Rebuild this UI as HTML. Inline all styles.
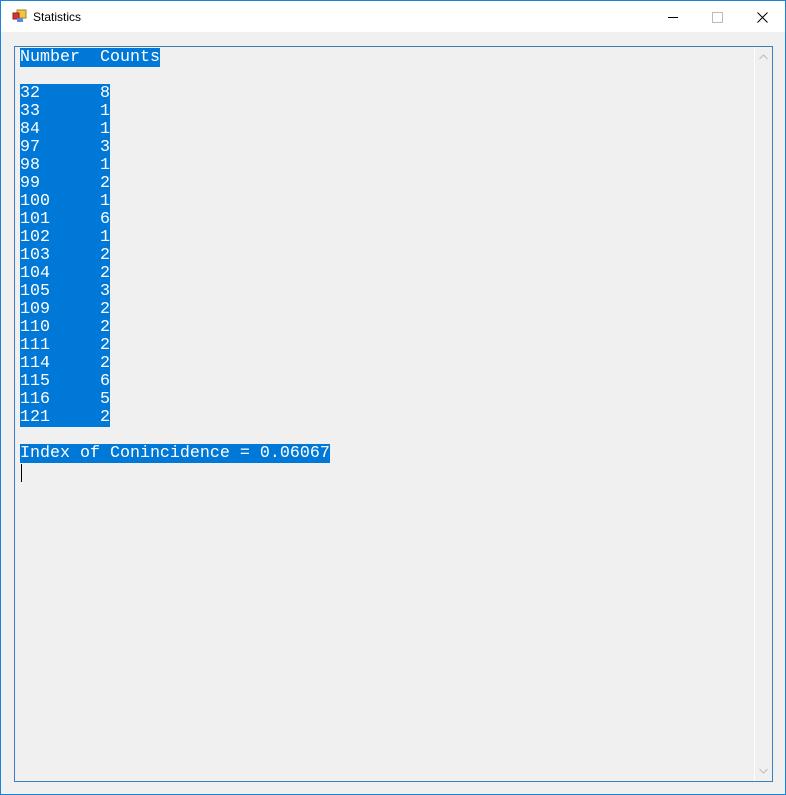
<!DOCTYPE html>
<html><head><style>
html,body{margin:0;padding:0;}
body{width:786px;height:795px;position:relative;background:#f0f0f0;overflow:hidden;font-family:"Liberation Sans",sans-serif;}
.win{position:absolute;left:0;top:0;width:784px;height:793px;border:1px solid #1883d7;background:#f0f0f0;}
.title{position:absolute;left:0;top:0;width:784px;height:31px;background:#fff;}
.title .t{position:absolute;left:32px;top:9px;font-size:12px;color:#000;}
.box{position:absolute;left:14px;top:46px;width:757px;height:734px;border:1px solid #3a7fc0;background:#f0f0f0;}
.sb{position:absolute;right:0;top:0;width:17px;height:734px;border-left:1px solid #fff;background:#f0f0f0;}
pre{position:absolute;left:5px;top:2px;margin:0;font-family:"Liberation Mono","Courier New",monospace;font-size:16.67px;line-height:18px;color:#fff;}
pre span{background:#0078d7;}
.cur{position:absolute;left:6px;top:417px;width:1px;height:18px;background:#000;}
</style></head><body>
<div class="win">
<div class="title">
<svg style="position:absolute;left:11px;top:8px" width="16" height="14" viewBox="0 0 16 14"><rect x="5" y="1" width="9" height="8" fill="#f3c440" stroke="#a08030" stroke-width="1"/><rect x="1" y="4" width="6" height="6" fill="#d33" stroke="#822" stroke-width="1"/><rect x="5" y="9" width="6" height="4" fill="#5a8fd8"/></svg>
<div class="t">Statistics</div>
<div style="position:absolute;left:667px;top:16px;width:10px;height:1px;background:#000"></div>
<div style="position:absolute;left:711px;top:11px;width:9px;height:9px;border:1px solid #bbb"></div>
<svg style="position:absolute;left:756px;top:11px" width="11" height="11"><path d="M0.5 0.5L10.5 10.5M10.5 0.5L0.5 10.5" stroke="#000" stroke-width="1"/></svg>
</div>
</div>
<div class="box">
<pre><span>Number  Counts</span>

<span>32      8</span>
<span>33      1</span>
<span>84      1</span>
<span>97      3</span>
<span>98      1</span>
<span>99      2</span>
<span>100     1</span>
<span>101     6</span>
<span>102     1</span>
<span>103     2</span>
<span>104     2</span>
<span>105     3</span>
<span>109     2</span>
<span>110     2</span>
<span>111     2</span>
<span>114     2</span>
<span>115     6</span>
<span>116     5</span>
<span>121     2</span>

<span>Index of Conincidence = 0.06067</span></pre>
<div class="cur"></div>
<div class="sb">
<svg style="position:absolute;left:4px;top:7px" width="9" height="6"><path d="M0.5 5L4.5 1L8.5 5" stroke="#c0c0c0" fill="none" stroke-width="1.2"/></svg>
<svg style="position:absolute;left:4px;top:721px" width="9" height="6"><path d="M0.5 1L4.5 5L8.5 1" stroke="#c0c0c0" fill="none" stroke-width="1.2"/></svg>
</div>
</div>
</body></html>
